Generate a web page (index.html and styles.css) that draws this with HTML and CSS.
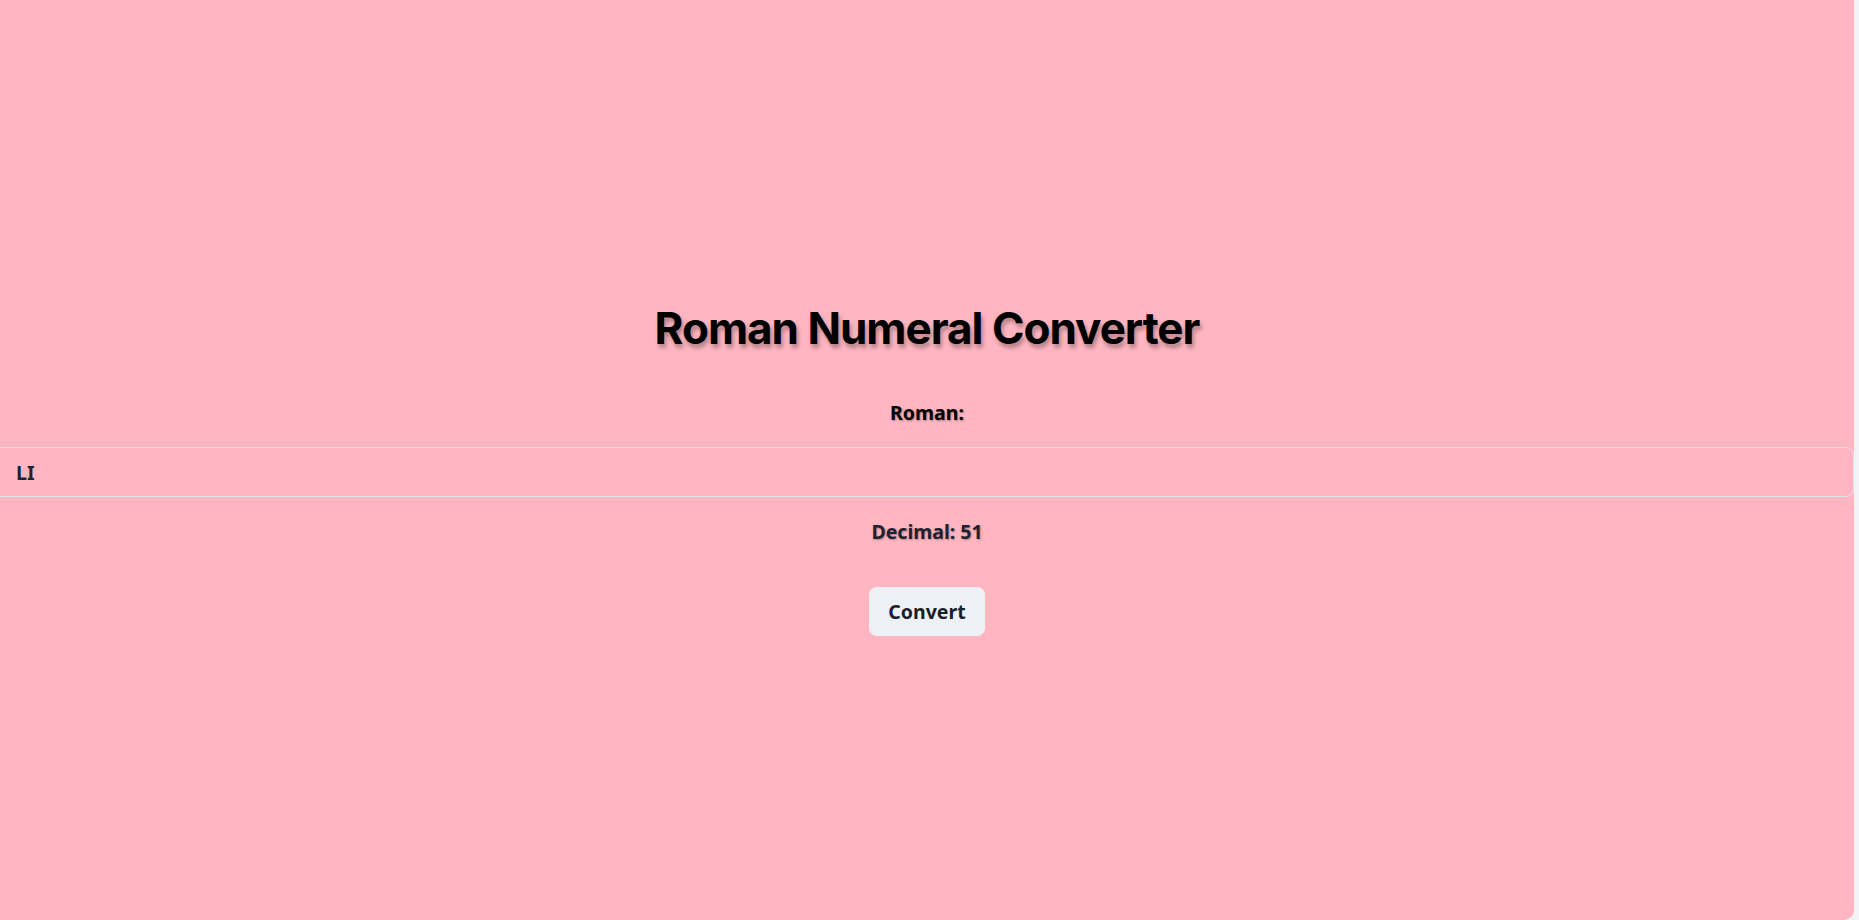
FILE: index.html
```html
<!DOCTYPE html>
<html lang="en">
<head>
<meta charset="utf-8">
<title>Roman Numeral Converter</title>
<link rel="stylesheet" href="styles.css">
</head>
<body>
<main class="panel">
  <h1 class="title">Roman Numeral Converter</h1>
  <label class="label" for="roman">Roman:</label>
  <input class="field" id="roman" type="text" value="LI">
  <p class="result">Decimal: 51</p>
  <button class="btn" type="button">Convert</button>
</main>
</body>
</html>
```

FILE: styles.css
```css
html, body {
  margin: 0;
  padding: 0;
  height: 100%;
}
body {
  background: #f3f3f6;
  overflow: hidden;
  font-family: "Noto Sans", "Open Sans", sans-serif;
}
.panel {
  box-sizing: border-box;
  width: calc(100% - 5px);
  height: 920px;
  background: #ffb6c1;
  border-bottom-right-radius: 10px;
  display: flex;
  flex-direction: column;
  align-items: center;
  padding-top: 301px;
}
.title {
  margin: 0;
  font-family: Inter, "Liberation Sans", sans-serif;
  font-weight: 700;
  font-size: 44px;
  line-height: 54px;
  letter-spacing: -1px;
  color: #000;
  text-shadow: 2px 4px 4px rgba(0, 0, 0, 0.3);
}
.label {
  margin-top: 44px;
  font-weight: 700;
  font-size: 19.5px;
  line-height: 28px;
  color: #000;
  text-shadow: 1px 1px 2px rgba(0, 0, 0, 0.35);
}
.field {
  box-sizing: border-box;
  align-self: stretch;
  margin: 20px 0 0 -12px;
  width: calc(100% + 12px);
  height: 50px;
  padding: 0 16px 0 27px;
  border: 1px solid #dfe3ea;
  border-radius: 8px;
  background: transparent;
  font-family: "Noto Sans", "Open Sans", sans-serif;
  font-weight: 700;
  font-size: 19.5px;
  color: #1e2230;
  outline: none;
}
.result {
  margin: 21px 0 0;
  font-weight: 700;
  font-size: 19.5px;
  line-height: 28px;
  color: #1e2230;
  text-shadow: 1px 1px 2px rgba(0, 0, 0, 0.3);
}
.btn {
  margin-top: 41px;
  height: 49px;
  padding: 0 19px;
  border: none;
  border-radius: 8px;
  background: #edf1f6;
  font-family: "Noto Sans", "Open Sans", sans-serif;
  font-weight: 700;
  font-size: 19.5px;
  color: #1a1e2a;
  cursor: pointer;
}
```
